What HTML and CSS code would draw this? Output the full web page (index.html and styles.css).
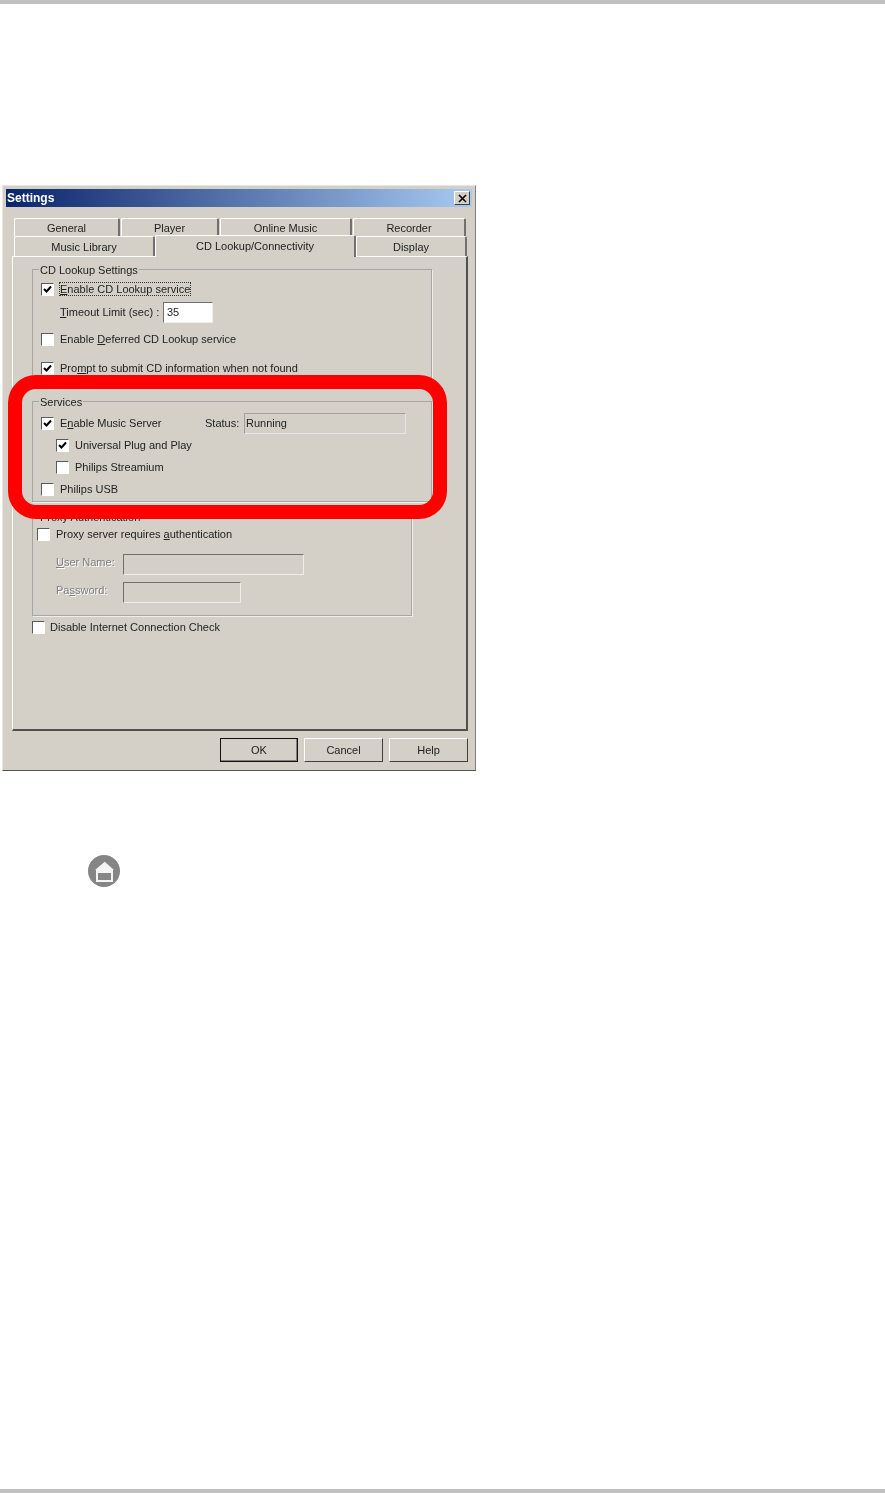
FILE: index.html
```html
<!DOCTYPE html>
<html lang="en">
<head>
    <meta charset="UTF-8">
    <title>Settings</title>
    <link rel="stylesheet" href="styles.css">
</head>
<body>
    <svg class="defs">
        <symbol id="tick" viewBox="0 0 11 11">
            <path d="M2 5 L4.5 7.5 L9 2.5" fill="none" stroke="#000" stroke-width="2"/>
        </symbol>
    </svg>
    <div class="page">
        <div class="dialog">
            <div class="titlebar">
                <span class="title">Settings</span>
                <span class="close">
                    <svg width="9" height="9" viewBox="0 0 9 9"><path d="M1 1 L8 8 M8 1 L1 8" stroke="#000" stroke-width="1.6"/></svg>
                </span>
            </div>
            <div class="tabs">
                <div class="tabrow top">
                    <div class="tab w106">General</div>
                    <div class="tab w98">Player</div>
                    <div class="tab w132">Online Music</div>
                    <div class="tab w113">Recorder</div>
                </div>
                <div class="tabrow">
                    <div class="tab w141">Music Library</div>
                    <div class="tab active">CD Lookup/Connectivity</div>
                    <div class="tab w111">Display</div>
                </div>
            </div>
            <div class="panel">
                <fieldset class="group lookup">
                    <legend>CD Lookup Settings</legend>
                    <div class="row">
                        <span class="check"><svg><use href="#tick"/></svg></span>
                        <span class="focus"><u>E</u>nable CD Lookup service</span>
                    </div>
                    <div class="row timeout">
                        <span class="limit"><u>T</u>imeout Limit (sec) :</span>
                        <span class="field white w50">35</span>
                    </div>
                    <div class="row gap6">
                        <span class="check"></span>
                        <span>Enable <u>D</u>eferred CD Lookup service</span>
                    </div>
                    <div class="row gap7">
                        <span class="check"><svg><use href="#tick"/></svg></span>
                        <span>Pro<u>m</u>pt to submit CD information when not found</span>
                    </div>
                </fieldset>
                <fieldset class="group services">
                    <legend>Services</legend>
                    <div class="row">
                        <span class="check"><svg><use href="#tick"/></svg></span>
                        <span class="server">E<u>n</u>able Music Server</span>
                        <span class="status">Status:</span>
                        <span class="field w162">Running</span>
                    </div>
                    <div class="row sub">
                        <span class="check"><svg><use href="#tick"/></svg></span>
                        <span>Universal Plug and Play</span>
                    </div>
                    <div class="row sub">
                        <span class="check"></span>
                        <span>Philips Streamium</span>
                    </div>
                    <div class="row">
                        <span class="check"></span>
                        <span>Philips USB</span>
                    </div>
                </fieldset>
                <fieldset class="group proxy">
                    <legend>Proxy Authentication</legend>
                    <div class="row">
                        <span class="check"></span>
                        <span>Proxy server requires <u>a</u>uthentication</span>
                    </div>
                    <div class="row login first">
                        <span class="muted"><u>U</u>ser Name:</span>
                        <span class="field w181"></span>
                    </div>
                    <div class="row login">
                        <span class="muted">Pa<u>s</u>sword:</span>
                        <span class="field w118"></span>
                    </div>
                </fieldset>
                <div class="row internet">
                    <span class="check"></span>
                    <span>Disable Internet Connection Check</span>
                </div>
            </div>
            <div class="buttons">
                <div class="btn default">OK</div>
                <div class="btn">Cancel</div>
                <div class="btn">Help</div>
            </div>
        </div>
        <div class="ring"></div>
        <svg class="home" width="32" height="32" viewBox="0 0 32 32">
            <circle cx="16" cy="16" r="16" fill="#858585"/>
            <path d="M16.7 6.7 L26 15 H25 V27 H8 V15 H7 Z" fill="#f4f4f4"/>
            <rect x="10" y="18" width="13" height="7" fill="#858585"/>
        </svg>
        <div class="foot"></div>
    </div>
</body>
</html>
```
FILE: styles.css
```css
* {
    box-sizing: border-box;
}
body {
    margin: 0;
    background-color: white;
    font-family: "Liberation Sans", Arial, sans-serif;
    font-size: 11px;
    color: #222;
}
.defs {
    display: none;
}
.page {
    position: relative;
    display: flex;
    flex-direction: column;
    height: 1493px;
    border-top: 4px solid #c0c0c0;
}
.foot {
    margin-top: auto;
    height: 4px;
    background-color: #c0c0c0;
}

/* dialog window */
.dialog {
    width: 474px;
    height: 586px;
    margin: 181px 0 0 2px;
    padding: 3px 3px 0;
    background-color: #d4d0c8;
    border: 1px solid #e8e6e1;
    border-right-color: #808080;
    border-bottom-color: #555;
    filter: blur(0.5px);
}
.titlebar {
    display: flex;
    align-items: center;
    justify-content: space-between;
    height: 18px;
    padding: 0 2px 0 1px;
    background: linear-gradient(to right, #0a246a, #a6caf0);
}
.title {
    color: white;
    font-weight: bold;
    font-size: 12px;
}
.close {
    display: flex;
    align-items: center;
    justify-content: center;
    width: 16px;
    height: 14px;
    background-color: #d4d0c8;
    border: 1px solid;
    border-color: #fff #404040 #404040 #fff;
}

/* tabs */
.tabs {
    margin: 11px 0 0 8px;
}
.tabrow {
    display: flex;
    height: 20px;
}
.tabrow.top {
    height: 18px;
    gap: 1px;
}
.tab {
    display: flex;
    align-items: center;
    justify-content: center;
    background-color: #d4d0c8;
    border-top: 1px solid #fff;
    border-left: 1px solid #fff;
    border-right: 2px solid #707070;
    border-radius: 2px 2px 0 0;
}
.tab.active {
    position: relative;
    z-index: 1;
    width: 201px;
    height: 22px;
    margin-top: -1px;
    padding-bottom: 2px;
}
.w106 { width: 106px; }
.w98 { width: 98px; }
.w132 { width: 132px; }
.w113 { width: 113px; }
.w141 { width: 141px; }
.w111 { width: 111px; }

/* property page */
.panel {
    width: 456px;
    height: 475px;
    margin-left: 6px;
    padding: 5px 0 0 19px;
    border: 1px solid #fff;
    border-right: 2px solid #505050;
    border-bottom: 2px solid #505050;
}
.group {
    margin: 0;
    padding: 0 0 0 8px;
    min-width: 0;
    width: 400px;
    border: 1px solid #a8a6a0;
    box-shadow: 1px 1px 0 #f0eeea;
}
.group legend {
    height: 14px;
    margin-left: -2px;
    padding: 3px 1px 0;
    line-height: 11px;
}
.lookup {
    height: 124px;
    padding-top: 2px;
}
.services {
    height: 108px;
    margin-top: 8px;
    padding-top: 4px;
}
.proxy {
    width: 380px;
    height: 107px;
    margin-top: 7px;
    padding-left: 4px;
}
.proxy legend {
    margin-left: 2px;
}
.row {
    display: flex;
    align-items: center;
    gap: 6px;
    height: 22px;
}
.row.gap6 { margin-top: 5px; }
.row.gap7 { margin-top: 7px; }
.row.timeout {
    gap: 3px;
    margin: 1px 0 0 19px;
}
.limit {
    width: 100px;
}
.row.sub {
    margin-left: 15px;
}
.row.login {
    gap: 9px;
    margin-left: 19px;
}
.row.login.first {
    margin-top: 8px;
}
.row.login .muted {
    width: 58px;
    padding-bottom: 4px;
    white-space: nowrap;
}
.row.login + .row.login {
    margin-top: 6px;
}
.row.internet {
    gap: 5px;
}
.check {
    flex: none;
    width: 13px;
    height: 13px;
    background-color: white;
    border: 1px solid;
    border-color: #5a5a5a #fff #fff #5a5a5a;
}
.check svg {
    display: block;
    width: 11px;
    height: 11px;
}
.focus {
    outline: 1px dotted #333;
}
.server {
    width: 139px;
}
.status {
    width: 33px;
}
.field {
    display: flex;
    align-items: center;
    height: 21px;
    padding-left: 3px;
    border: 1px solid;
    border-color: #707070 #f0eeea #f0eeea #707070;
}
.field.white {
    background-color: white;
}
.w50 { width: 50px; }
.w162 { width: 162px; padding-left: 1px; border-color: #a0a0a0 #e8e6e1 #e8e6e1 #a0a0a0; }
.w181 { width: 181px; }
.w118 { width: 118px; }
.muted {
    color: #808080;
    text-shadow: 1px 1px 0 #fff;
}

/* bottom buttons */
.buttons {
    display: flex;
    justify-content: flex-end;
    gap: 6px;
    margin: 7px 4px 0 0;
}
.btn {
    display: flex;
    align-items: center;
    justify-content: center;
    width: 79px;
    height: 24px;
    border: 1px solid;
    border-color: #fff #404040 #404040 #fff;
}
.btn.default {
    width: 78px;
    border: 1px solid #111;
    box-shadow: inset -1px -1px 0 #808080;
}

/* overlays */
.ring {
    position: absolute;
    left: 8px;
    top: 371px;
    width: 439px;
    height: 144px;
    border: 14px solid #f00;
    border-radius: 28px;
}
.home {
    position: absolute;
    left: 88px;
    top: 851px;
}
```
